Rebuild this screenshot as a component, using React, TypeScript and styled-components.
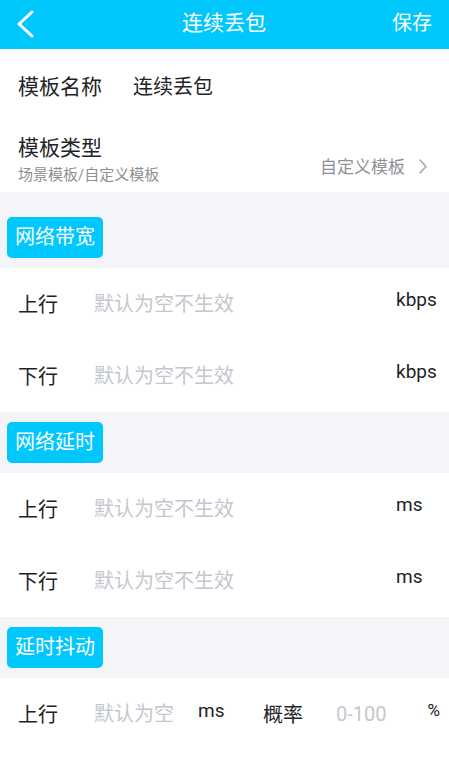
import styled, { createGlobalStyle } from "styled-components";

const GlobalStyle = createGlobalStyle`
  * {
    box-sizing: border-box;
  }
  body {
    margin: 0;
    background: #ffffff;
    font-family: Roboto, "Noto Sans CJK SC", sans-serif;
    color: #222326;
  }
`;

const CYAN = "#00c8fc";

interface Field {
    label: string;
    unit: string;
}

const sections: { title: string; fields: Field[] }[] = [
    {
        title: "网络带宽",
        fields: [
            { label: "上行", unit: "kbps" },
            { label: "下行", unit: "kbps" },
        ],
    },
    {
        title: "网络延时",
        fields: [
            { label: "上行", unit: "ms" },
            { label: "下行", unit: "ms" },
        ],
    },
];

const App = () => {
    return (
        <>
            <GlobalStyle />
            <Page>
                <Header>
                    <BackButton aria-label="返回">
                        <svg width="18" height="28" viewBox="0 0 18 28" fill="none">
                            <polyline points="16,2 3,14 16,26" stroke="#fff" strokeWidth="3" strokeLinecap="round" strokeLinejoin="round" />
                        </svg>
                    </BackButton>
                    <Title>连续丢包</Title>
                    <SaveButton>保存</SaveButton>
                </Header>

                <NameRow>
                    <InfoLabel>模板名称</InfoLabel>
                    <NameValue>连续丢包</NameValue>
                </NameRow>

                <TypeRow>
                    <TypeText>
                        <InfoLabel>模板类型</InfoLabel>
                        <SubText>场景模板/自定义模板</SubText>
                    </TypeText>
                    <TypeValue>
                        自定义模板
                        <svg width="10" height="17" viewBox="0 0 10 17" fill="none">
                            <polyline points="2,2 8,8.5 2,15" stroke="#a3a7b3" strokeWidth="1.6" strokeLinecap="round" strokeLinejoin="round" />
                        </svg>
                    </TypeValue>
                </TypeRow>

                {sections.map((section, i) => (
                    <div key={section.title}>
                        <SectionHead first={i === 0}>
                            <Tag>{section.title}</Tag>
                        </SectionHead>
                        {section.fields.map((f) => (
                            <FieldRow key={f.label}>
                                <FieldLabel>{f.label}</FieldLabel>
                                <FieldInput placeholder="默认为空不生效" />
                                <Unit>{f.unit}</Unit>
                            </FieldRow>
                        ))}
                    </div>
                ))}

                <SectionHead>
                    <Tag>延时抖动</Tag>
                </SectionHead>
                <FieldRow>
                    <FieldLabel>上行</FieldLabel>
                    <ShortInput placeholder="默认为空" />
                    <JitterUnit>ms</JitterUnit>
                    <RateLabel>概率</RateLabel>
                    <FieldInput placeholder="0-100" />
                    <Percent>%</Percent>
                </FieldRow>
            </Page>
        </>
    );
};

const Page = styled.div`
  width: 100%;
  min-height: 763px;
  background: #ffffff;
`;

const Header = styled.header`
  height: 49px;
  background: ${CYAN};
  display: grid;
  grid-template-columns: 1fr auto 1fr;
  align-items: center;
  padding: 0 17px 0 16px;
  color: #fff;
`;

const BackButton = styled.div`
  display: flex;
  align-items: center;
  justify-self: start;
  margin-top: -1px;
`;

const Title = styled.div`
  font-size: 21px;
  line-height: 28px;
  margin-top: -4px;
`;

const SaveButton = styled.div`
  justify-self: end;
  font-size: 20px;
  line-height: 28px;
  margin-top: -4px;
`;

const NameRow = styled.div`
  height: 76px;
  display: flex;
  align-items: center;
  padding: 0 18px;
`;

const InfoLabel = styled.div`
  font-size: 21px;
  line-height: 28px;
  color: #222326;
`;

const NameValue = styled.div`
  margin-left: 31px;
  font-size: 20px;
  line-height: 28px;
  color: #222326;
`;

const TypeRow = styled.div`
  height: 67px;
  display: flex;
  align-items: center;
  justify-content: space-between;
  padding: 0 21px 0 18px;
`;

const TypeText = styled.div`
  display: flex;
  flex-direction: column;
  gap: 3px;
  padding-top: 2px;
`;

const SubText = styled.div`
  font-size: 15px;
  line-height: 20px;
  color: #8e9097;
`;

const TypeValue = styled.div`
  display: flex;
  align-items: center;
  gap: 13px;
  font-size: 17px;
  line-height: 24px;
  color: #8e9097;
  margin-top: 16px;
`;

const SectionHead = styled.div<{ first?: boolean }>`
  background: #f4f5f9;
  padding: ${(p) => (p.first ? "25px" : "10px")} 7px 10px;
`;

const Tag = styled.span`
  display: inline-block;
  height: 41px;
  line-height: 41px;
  padding: 0 8px;
  border-radius: 5px;
  background: ${CYAN};
  color: #fff;
  font-size: 20px;
`;

const FieldRow = styled.div`
  height: 72px;
  display: flex;
  align-items: center;
  padding: 0 9px 0 18px;
`;

const FieldLabel = styled.div`
  width: 76px;
  flex-shrink: 0;
  font-size: 20px;
  line-height: 28px;
  color: #222326;
  padding-top: 2px;
`;

const FieldInput = styled.input`
  flex: 1;
  min-width: 0;
  border: none;
  outline: none;
  background: transparent;
  padding: 0;
  font-family: inherit;
  font-size: 20px;
  line-height: 28px;
  color: #222326;

  &::placeholder {
    color: #c4c7cf;
  }
`;

const ShortInput = styled(FieldInput)`
  flex: 0 0 104px;
`;

const Unit = styled.div`
  width: 44px;
  align-self: flex-start;
  padding-top: 20px;
  font-size: 19px;
  line-height: 24px;
  color: #222326;
`;

const JitterUnit = styled(Unit)`
  width: 65px;
  flex-shrink: 0;
  padding-top: 21px;
`;

const RateLabel = styled(FieldLabel)`
  width: 73px;
`;

const Percent = styled.div`
  align-self: flex-start;
  padding-top: 20px;
  font-size: 17px;
  line-height: 24px;
  color: #222326;
`;

export default App;
